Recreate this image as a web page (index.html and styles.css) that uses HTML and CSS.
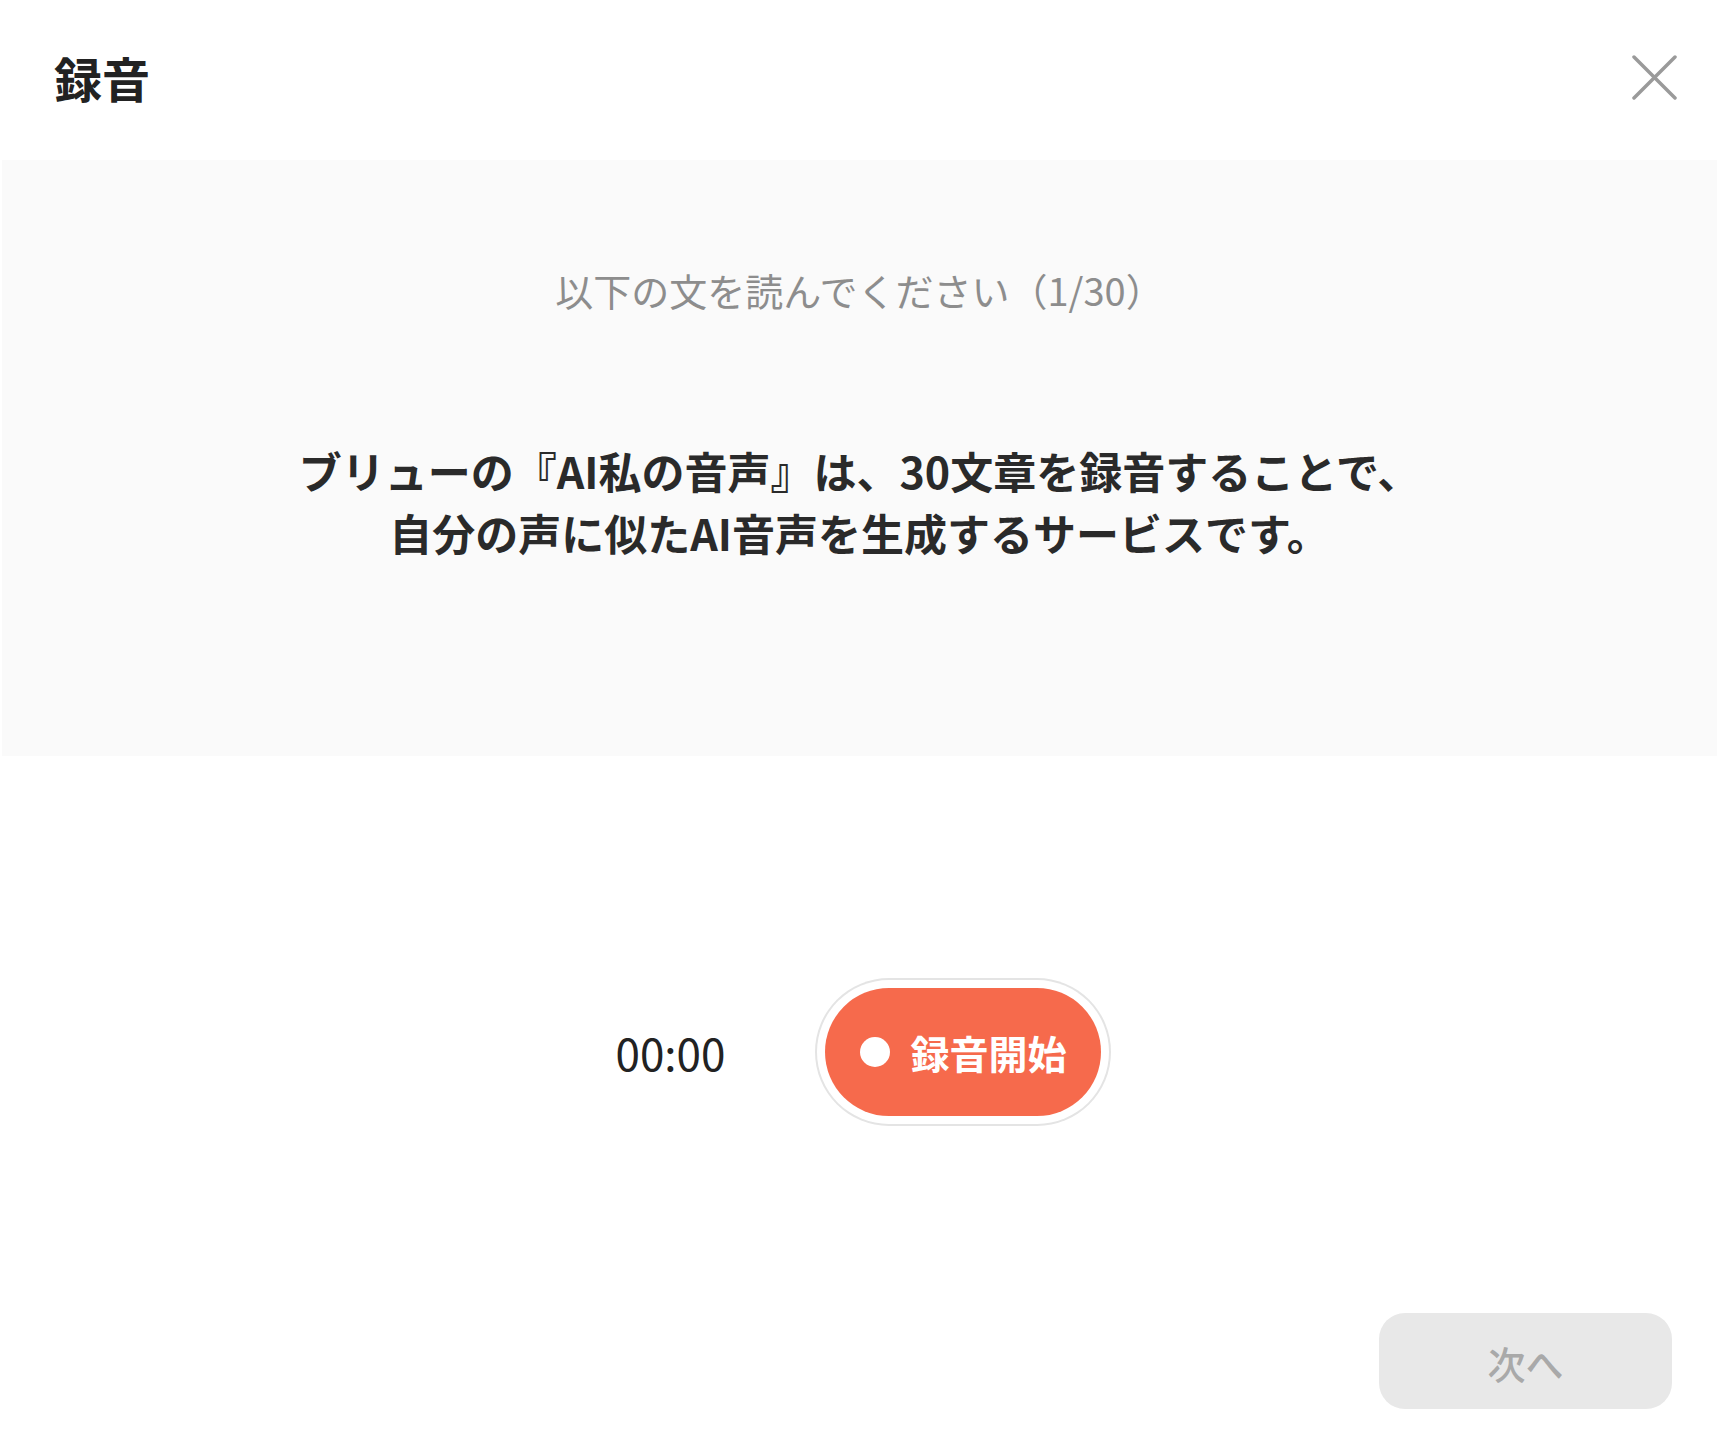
FILE: index.html
```html
<!DOCTYPE html>
<html lang="ja">
<head>
<meta charset="utf-8">
<title>録音</title>
<link rel="stylesheet" href="styles.css">
</head>
<body>
<div class="dialog">
  <header class="header">
    <h1 class="title">録音</h1>
    <button class="close" aria-label="閉じる">
      <svg width="45" height="45" viewBox="0 0 45 45"><path d="M2 2 L43 43 M43 2 L2 43" stroke="#9a9a9a" stroke-width="3.5" stroke-linecap="round" fill="none"/></svg>
    </button>
  </header>
  <section class="panel">
    <p class="instruction">以下の文を読んでください（1/30）</p>
    <p class="sentence">ブリューの『AI私の音声』は、30文章を録音することで、<br>自分の声に似たAI音声を生成するサービスです。</p>
  </section>
  <div class="recorder">
    <span class="timer">00:00</span>
    <button class="record"><span class="dot"></span><span class="record-label">録音開始</span></button>
  </div>
  <div class="footer">
    <button class="next" disabled>次へ</button>
  </div>
</div>
</body>
</html>
```

FILE: styles.css
```css
html, body {
  margin: 0;
  padding: 0;
  background: #ffffff;
}
body {
  font-family: "Noto Sans CJK JP", "Noto Sans", sans-serif;
  color: #2a2a2a;
}
.dialog {
  width: 1717px;
  height: 1446px;
  display: flex;
  flex-direction: column;
}
.header {
  height: 160px;
  display: flex;
  align-items: center;
  justify-content: space-between;
  padding: 0 40px 0 54px;
  box-sizing: border-box;
}
.title {
  margin: -6px 0 0;
  font-size: 48px;
  font-weight: 700;
  line-height: 1;
  color: #222;
}
.close {
  border: none;
  background: none;
  padding: 0;
  width: 45px;
  height: 45px;
  display: block;
  margin-top: -6px;
}
.close svg { display: block; }
.panel {
  margin-left: 2px;
  background: #fafafa;
  padding: 102px 0 193px;
  text-align: center;
}
.instruction {
  margin: 0;
  font-size: 38px;
  line-height: 56px;
  color: #8d8d8d;
}
.sentence {
  margin: 121px 0 0;
  font-size: 43px;
  line-height: 62px;
  font-weight: 700;
  color: #2a2a2a;
}
.recorder {
  margin-top: 232px;
  height: 128px;
  display: flex;
  align-items: center;
  justify-content: center;
  gap: 100px;
}
.timer {
  font-size: 44px;
  color: #222;
  line-height: 1;
}
.record {
  width: 276px;
  height: 128px;
  border: none;
  border-radius: 64px;
  background: #f66a4c;
  box-shadow: 0 0 0 8px #ffffff, 0 0 0 10px #e4e4e4;
  display: flex;
  align-items: center;
  justify-content: center;
  gap: 20px;
  padding: 0;
  font-family: inherit;
}
.dot {
  width: 30px;
  height: 30px;
  border-radius: 50%;
  background: #fff;
}
.record-label {
  color: #fff;
  font-size: 39px;
  font-weight: 700;
  line-height: 1;
}
.footer {
  margin-top: 197px;
  display: flex;
  justify-content: flex-end;
  padding-right: 45px;
}
.next {
  width: 293px;
  height: 96px;
  border: none;
  border-radius: 26px;
  background: #e8e8e8;
  color: #a9a9a9;
  font-family: inherit;
  font-size: 38px;
  font-weight: 500;
  padding-top: 4px;
}
```
